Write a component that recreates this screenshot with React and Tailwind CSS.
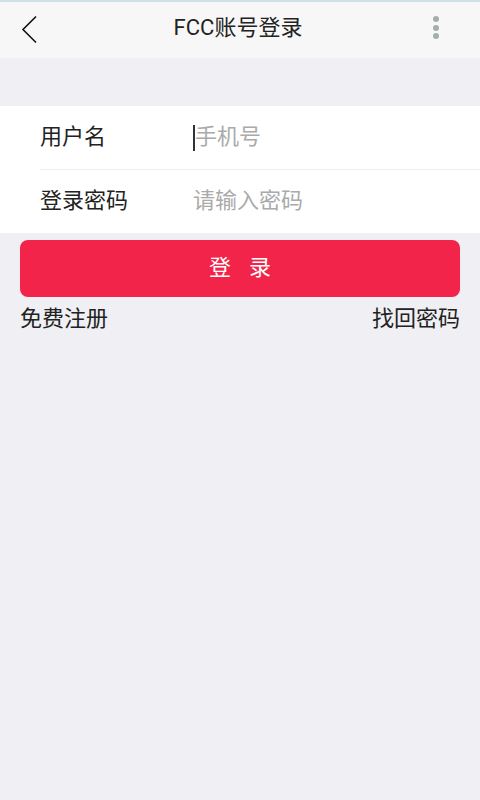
import React from 'react';

const font = { fontFamily: 'Roboto, "Noto Sans CJK SC", "Noto Sans", sans-serif' };

export default function App() {
  return (
    <div className="w-[480px] h-[800px] bg-[#efeff4] flex flex-col" style={font}>
      {/* header */}
      <div className="h-[2px] bg-[#cfe0ea]" />
      <div className="h-[56px] bg-[#f7f7f7] flex items-center pl-5 pr-[41px] relative">
        <svg width="18" height="30" viewBox="0 0 18 30" className="ml-[1px] -mt-[1px]">
          <path d="M15 1.5 L2 14.5 L15 27.5" fill="none" stroke="#111" strokeWidth="1.6" />
        </svg>
        <div className="flex-1 text-center text-[22px] text-[#222] leading-none -mt-[5px] pl-[4px]">FCC账号登录</div>
        <div className="flex flex-col gap-[2.5px] -mt-[5px]">
          <span className="w-[6px] h-[6px] rounded-full bg-[#a3afae]" />
          <span className="w-[6px] h-[6px] rounded-full bg-[#a3afae]" />
          <span className="w-[6px] h-[6px] rounded-full bg-[#a3afae]" />
        </div>
      </div>

      {/* form */}
      <div className="mt-[48px] bg-white">
        <div className="h-[63px] flex items-center pl-10">
          <span className="w-[153px] text-[22px] leading-none text-[#222] -mt-[2px]">用户名</span>
          <span className="flex items-center text-[22px] leading-none text-[#aaa]">
            <span className="w-[2px] h-[26px] bg-[#333]" />
            <span className="-mt-[2px]">手机号</span>
          </span>
        </div>
        <div className="ml-10 h-[1px] bg-[#eeeeee]" />
        <div className="h-[63px] flex items-center pl-10">
          <span className="w-[153px] text-[22px] leading-none text-[#222] -mt-[2px]">登录密码</span>
          <span className="text-[22px] leading-none text-[#aaa] -mt-[2px]">请输入密码</span>
        </div>
      </div>

      {/* button */}
      <div className="px-5 mt-[7px]">
        <button className="w-full h-[57px] rounded-[8px] bg-[#f2244a] text-white text-[22px] leading-none tracking-[18px] pl-[18px] pb-[2px]">
          登录
        </button>
      </div>

      <div className="flex justify-between px-5 mt-[11px] text-[22px] leading-none text-[#222]">
        <span>免费注册</span>
        <span>找回密码</span>
      </div>
    </div>
  );
}
